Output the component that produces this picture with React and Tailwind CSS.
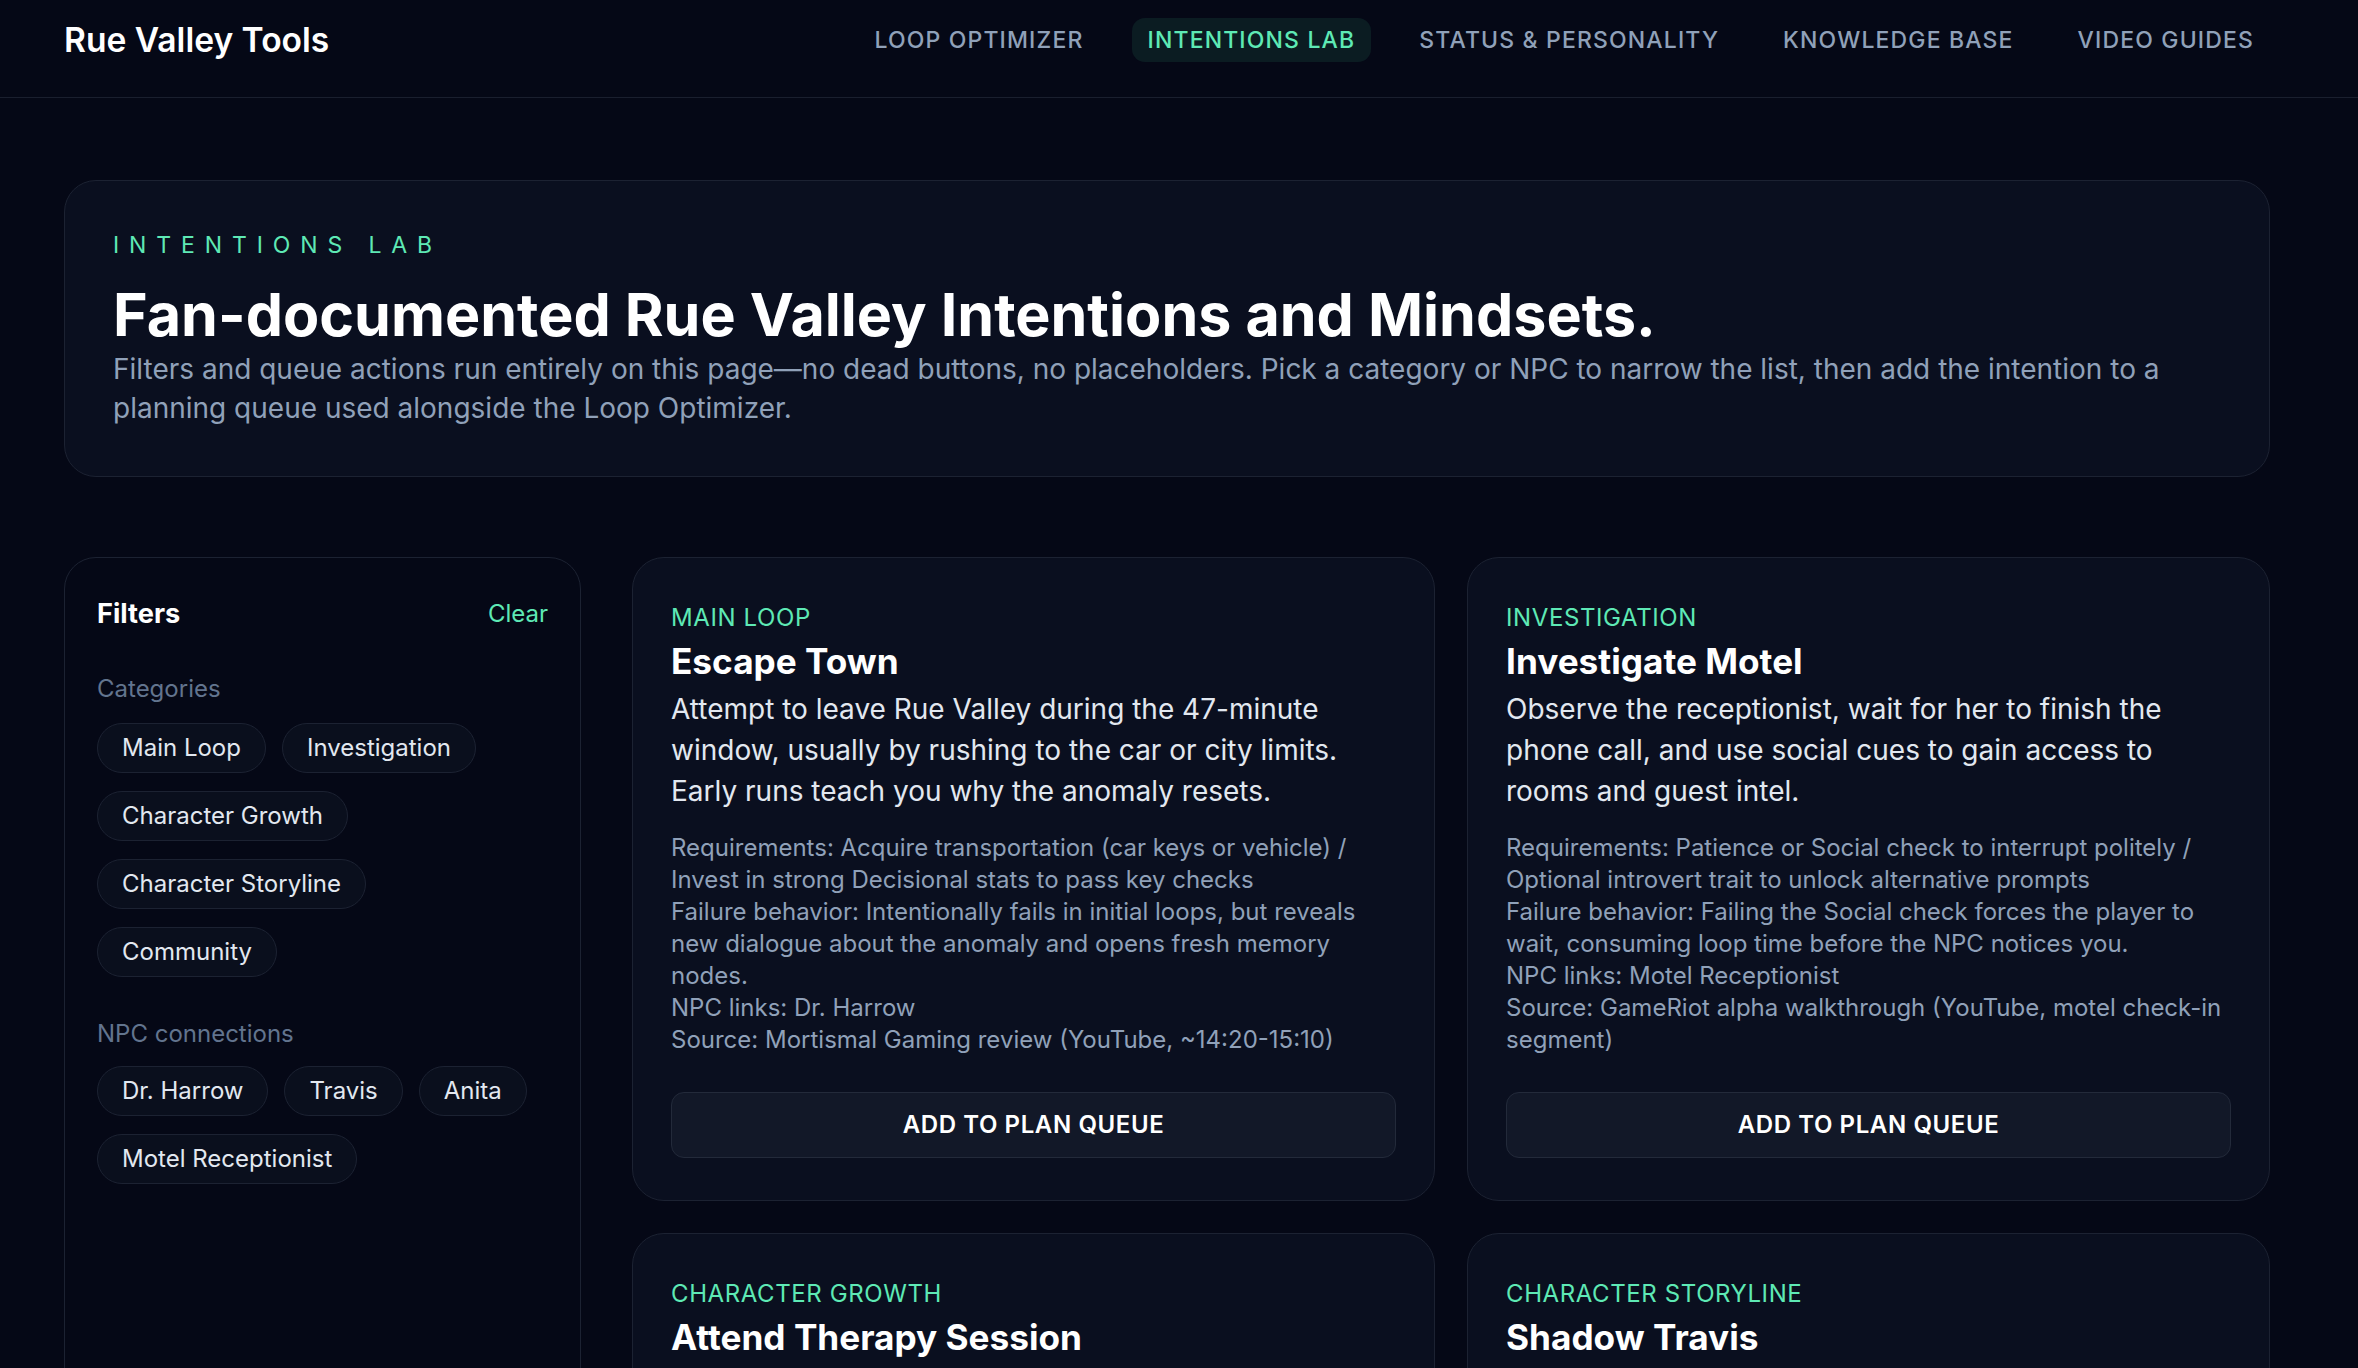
import { useState } from 'react'

const navItems = [
  { key: 'loop', label: 'Loop Optimizer' },
  { key: 'intentions', label: 'Intentions Lab' },
  { key: 'status', label: 'Status & Personality' },
  { key: 'kb', label: 'Knowledge Base' },
  { key: 'video', label: 'Video Guides' },
]

const categories = ['Main Loop', 'Investigation', 'Character Growth', 'Character Storyline', 'Community']
const npcs = ['Dr. Harrow', 'Travis', 'Anita', 'Motel Receptionist']

const intentions = [
  {
    id: 'escape-town',
    category: 'Main Loop',
    title: 'Escape Town',
    summary:
      'Attempt to leave Rue Valley during the 47-minute window, usually by rushing to the car or city limits. Early runs teach you why the anomaly resets.',
    requirements: 'Acquire transportation (car keys or vehicle) / Invest in strong Decisional stats to pass key checks',
    failure:
      'Intentionally fails in initial loops, but reveals new dialogue about the anomaly and opens fresh memory nodes.',
    npcs: ['Dr. Harrow'],
    source: 'Mortismal Gaming review (YouTube, ~14:20-15:10)',
  },
  {
    id: 'investigate-motel',
    category: 'Investigation',
    title: 'Investigate Motel',
    summary:
      'Observe the receptionist, wait for her to finish the phone call, and use social cues to gain access to rooms and guest intel.',
    requirements: 'Patience or Social check to interrupt politely / Optional introvert trait to unlock alternative prompts',
    failure: 'Failing the Social check forces the player to wait, consuming loop time before the NPC notices you.',
    npcs: ['Motel Receptionist'],
    source: 'GameRiot alpha walkthrough (YouTube, motel check-in segment)',
  },
  {
    id: 'therapy-session',
    category: 'Character Growth',
    title: 'Attend Therapy Session',
    summary:
      "Keep the appointment with Dr. Harrow and talk through Eugene's thoughts to reshape his mindset before the loop closes.",
    requirements: 'Arrive at the clinic before the session slot / Pick honest dialogue options',
    failure: 'Skipping or stalling the session locks the related mindset until the next loop.',
    npcs: ['Dr. Harrow'],
    source: 'Community notes (Steam discussions)',
  },
  {
    id: 'shadow-travis',
    category: 'Character Storyline',
    title: 'Shadow Travis',
    summary:
      'Follow Travis across town without being noticed to learn where he disappears to in the middle of the loop.',
    requirements: 'Low-profile approach / Enough loop time left after the morning events',
    failure: 'Getting spotted ends the tail and Travis avoids you for the rest of the loop.',
    npcs: ['Travis'],
    source: 'Fan wiki storyline notes',
  },
]

function Chip({ label, active, onClick }) {
  return (
    <button
      onClick={onClick}
      className={`rounded-full border px-[24px] py-[8px] text-[24px] leading-[32px] transition-colors ${
        active
          ? 'border-emerald-300/60 bg-emerald-400/10 text-emerald-300'
          : 'border-[#1c2232] bg-[#0a0f1d] text-slate-200 hover:border-slate-600'
      }`}
    >
      {label}
    </button>
  )
}

function IntentionCard({ item, queued, onAdd }) {
  return (
    <article className="flex flex-col rounded-[32px] border border-[#1c2232] bg-[#0a0f1f] px-[38px] pt-[44px] pb-[42px]">
      <p className="text-[24px] leading-[32px] tracking-wide text-emerald-300 uppercase">{item.category}</p>
      <h3 className="mt-[5px] text-[35.2px] leading-[45px] font-bold text-white">{item.title}</h3>
      <p className="mt-[5px] text-[28px] leading-[40.6px] text-slate-200">{item.summary}</p>
      <div className="mt-[21px] text-[24px] leading-[32px] text-slate-400">
        <p>Requirements: {item.requirements}</p>
        <p>Failure behavior: {item.failure}</p>
        <p>NPC links: {item.npcs.join(', ')}</p>
        <p>Source: {item.source}</p>
      </div>
      <button
        onClick={onAdd}
        className="mt-[36px] rounded-[13px] border border-[#232a3a] bg-[#121828] py-[16px] text-[24px] leading-[32px] font-semibold tracking-wide text-white uppercase hover:bg-[#182033]"
      >
        {queued ? 'Added to plan queue' : 'Add to plan queue'}
      </button>
    </article>
  )
}

export default function App() {
  const [category, setCategory] = useState(null)
  const [npc, setNpc] = useState(null)
  const [queue, setQueue] = useState([])

  const visible = intentions.filter(
    (i) => (!category || i.category === category) && (!npc || i.npcs.includes(npc))
  )

  const toggleQueue = (id) =>
    setQueue((q) => (q.includes(id) ? q.filter((x) => x !== id) : [...q, id]))

  return (
    <div className="min-h-[1368px] bg-[#050816] font-['Inter','Noto_Sans',sans-serif] text-slate-200">
      {/* Top bar */}
      <header className="h-[98px] border-b border-[#1a1f2e] pt-[17px]">
        <div className="ml-[64px] flex h-[45px] w-[2206px] items-center justify-between">
          <span className="text-[33.6px] leading-[45px] font-semibold text-white">Rue Valley Tools</span>
          <nav className="flex items-center gap-[32px]">
            {navItems.map((item) => (
              <a
                key={item.key}
                href="#"
                className={`rounded-[13px] px-[16px] py-[6px] text-[23px] leading-[32px] font-medium tracking-wider uppercase ${
                  item.key === 'intentions'
                    ? 'bg-[#0b1c22] text-emerald-300'
                    : 'text-slate-400 hover:text-slate-200'
                }`}
              >
                {item.label}
              </a>
            ))}
          </nav>
        </div>
      </header>

      <main className="ml-[64px] w-[2206px] pt-[82px] pb-[102px]">
        {/* Hero */}
        <section className="rounded-[32px] border border-[#1c2232] bg-[#0a0f1f] p-[48px]">
          <p className="text-[23px] leading-[32px] tracking-[0.43em] text-emerald-300 uppercase">Intentions Lab</p>
          <h1 className="mt-[22px] text-[59.2px] leading-[64px] font-bold text-white">
            Fan-documented Rue Valley Intentions and Mindsets.
          </h1>
          <p className="mt-[3px] text-[28px] leading-[39.2px] text-slate-400">
            Filters and queue actions run entirely on this page—no dead buttons, no placeholders. Pick a category or
            NPC to narrow the list, then add the intention to a planning queue used alongside the Loop Optimizer.
          </p>
        </section>

        <div className="mt-[80px] flex gap-[51px]">
          {/* Filters */}
          <aside className="w-[517px] shrink-0 rounded-[32px] border border-[#1c2232] px-[32px] pt-[37px] pb-[32px]">
            <div className="flex items-center justify-between">
              <h2 className="text-[27.2px] leading-[38px] font-bold text-white">Filters</h2>
              <button
                onClick={() => {
                  setCategory(null)
                  setNpc(null)
                }}
                className="text-[24px] leading-[38px] text-emerald-300"
              >
                Clear
              </button>
            </div>

            <p className="mt-[40px] text-[24px] leading-[32px] text-slate-500">Categories</p>
            <div className="mt-[18px] flex flex-wrap gap-x-[16px] gap-y-[18px]">
              {categories.map((c) => (
                <Chip key={c} label={c} active={category === c} onClick={() => setCategory(category === c ? null : c)} />
              ))}
            </div>

            <p className="mt-[41px] text-[24px] leading-[32px] text-slate-500">NPC connections</p>
            <div className="mt-[16px] flex flex-wrap gap-x-[16px] gap-y-[18px]">
              {npcs.map((n) => (
                <Chip key={n} label={n} active={npc === n} onClick={() => setNpc(npc === n ? null : n)} />
              ))}
            </div>
          </aside>

          {/* Intentions */}
          <div className="grid flex-1 grid-cols-2 items-start gap-[32px]">
            {visible.map((item) => (
              <IntentionCard
                key={item.id}
                item={item}
                queued={queue.includes(item.id)}
                onAdd={() => toggleQueue(item.id)}
              />
            ))}
          </div>
        </div>
      </main>
    </div>
  )
}
